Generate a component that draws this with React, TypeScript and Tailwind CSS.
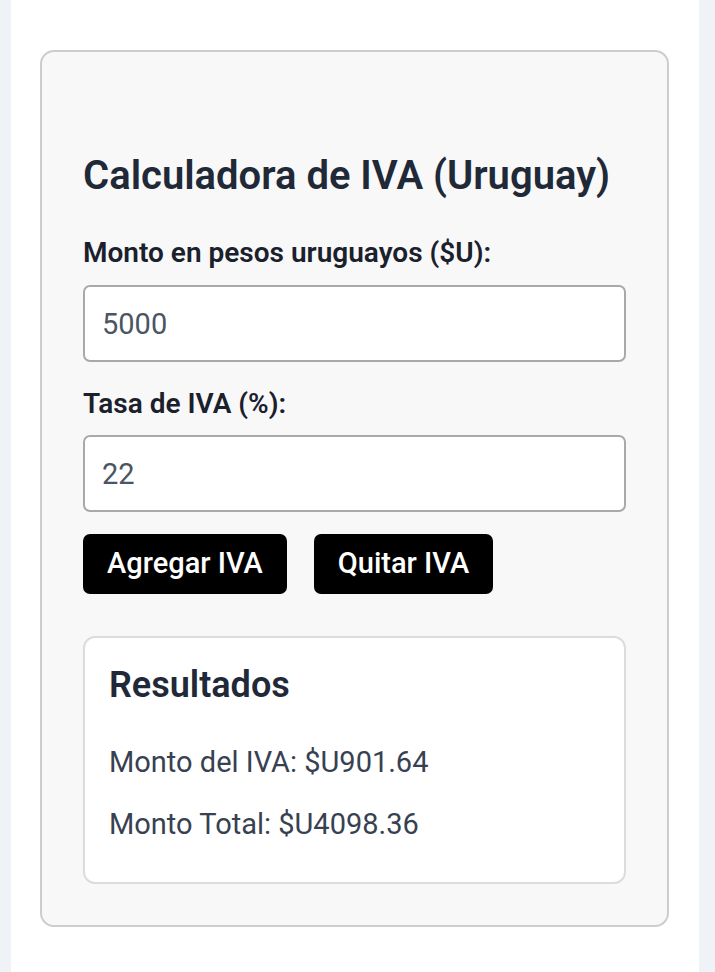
import { useState } from 'react';

export default function App() {
  const [monto, setMonto] = useState('5000');
  const [tasa, setTasa] = useState('22');
  const [iva, setIva] = useState('901.64');
  const [total, setTotal] = useState('4098.36');

  const agregar = () => {
    const m = parseFloat(monto) || 0;
    const t = (parseFloat(tasa) || 0) / 100;
    setIva((m * t).toFixed(2));
    setTotal((m * (1 + t)).toFixed(2));
  };

  const quitar = () => {
    const m = parseFloat(monto) || 0;
    const t = (parseFloat(tasa) || 0) / 100;
    const base = m / (1 + t);
    setIva((m - base).toFixed(2));
    setTotal(base.toFixed(2));
  };

  return (
    <div className="min-h-screen bg-[#eff3f8] pl-[11px] pr-[16px] font-['Roboto',sans-serif]">
      <div className="min-h-screen bg-white pl-[29px] pr-[30px] pt-[50px] pb-[40px]">
        <div className="rounded-[14px] border-2 border-[#cdcdcd] bg-[#f8f8f8] px-[41px] pt-[100px] pb-[41px]">
          <h2 className="text-[40px] leading-[48px] font-semibold text-[#1f2937]">
            Calculadora de IVA (Uruguay)
          </h2>

          <label className="mt-[35px] mb-[14px] block text-[28px] leading-[36px] font-semibold text-[#1a202c]">
            Monto en pesos uruguayos ($U):
          </label>
          <input
            value={monto}
            onChange={(e) => setMonto(e.target.value)}
            className="block h-[77px] w-full rounded-[7px] border-2 border-[#a9a9a9] bg-white px-[17px] text-[29px] text-[#4b5563] outline-none"
          />

          <label className="mt-[24px] mb-[13px] block text-[28px] leading-[36px] font-semibold text-[#1a202c]">
            Tasa de IVA (%):
          </label>
          <input
            value={tasa}
            onChange={(e) => setTasa(e.target.value)}
            className="block h-[77px] w-full rounded-[7px] border-2 border-[#a9a9a9] bg-white px-[17px] text-[29px] text-[#4b5563] outline-none"
          />

          <div className="mt-[22px] flex gap-[27px]">
            <button
              onClick={agregar}
              className="h-[60px] rounded-[7px] bg-black px-[24px] text-[29px] font-medium text-white"
            >
              Agregar IVA
            </button>
            <button
              onClick={quitar}
              className="h-[60px] rounded-[7px] bg-black px-[24px] text-[29px] font-medium text-white"
            >
              Quitar IVA
            </button>
          </div>

          <div className="mt-[42px] rounded-[12px] border-2 border-[#dcdcdc] bg-white px-[24px] pt-[26px] pb-[37px]">
            <h3 className="text-[36px] leading-[42px] font-semibold text-[#1f2937]">Resultados</h3>
            <p className="mt-[35px] text-[29px] leading-[42px] text-[#374151]">
              Monto del IVA: $U{iva}
            </p>
            <p className="mt-[20px] text-[29px] leading-[42px] text-[#374151]">
              Monto Total: $U{total}
            </p>
          </div>
        </div>
      </div>
    </div>
  );
}
